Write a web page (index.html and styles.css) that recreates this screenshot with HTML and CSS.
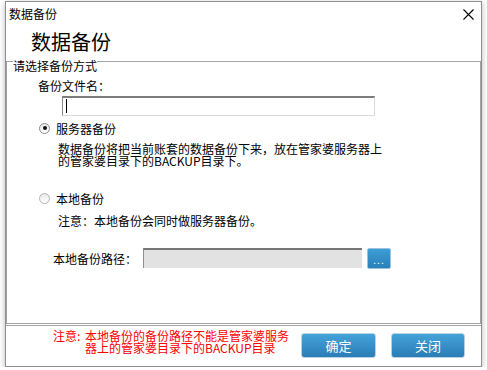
FILE: index.html
```html
<!DOCTYPE html>
<html lang="zh-CN">
<head>
    <meta charset="UTF-8">
    <title>数据备份</title>
    <link rel="stylesheet" href="styles.css">
</head>
<body>
    <div class="window">
        <div class="titlebar">
            <span class="title">数据备份</span>
            <svg class="close" width="11" height="11" viewBox="0 0 11 11">
                <path d="M0.5 0.5 L10.5 10.5 M10.5 0.5 L0.5 10.5" stroke="#000" stroke-width="1.1" fill="none"/>
            </svg>
        </div>

        <h1 class="heading">数据备份</h1>

        <div class="group">
            <div class="legend">请选择备份方式</div>

            <div class="field-label">备份文件名：</div>
            <div class="text-input"><span class="caret"></span></div>

            <div class="radio-row"><span class="radio checked"></span>服务器备份</div>
            <p class="desc">数据备份将把当前账套的数据备份下来，放在管家婆服务器上的管家婆目录下的BACKUP目录下。</p>

            <div class="radio-row second"><span class="radio"></span>本地备份</div>
            <p class="hint">注意：本地备份会同时做服务器备份。</p>

            <div class="path-row">
                <span class="path-label">本地备份路径：</span>
                <div class="path-input"></div>
                <button class="browse">...</button>
            </div>
        </div>

        <div class="footer">
            <div class="warning">
                <span class="warning-tag">注意:</span>
                <span class="warning-text">本地备份的备份路径不能是管家婆服务器上的管家婆目录下的BACKUP目录</span>
            </div>
            <div class="actions">
                <button class="btn">确定</button>
                <button class="btn">关闭</button>
            </div>
        </div>
    </div>
</body>
</html>
```

FILE: styles.css
```css
* {
    box-sizing: border-box;
    margin: 0;
    padding: 0;
}

body {
    font-family: "Noto Sans CJK SC", "Noto Sans", sans-serif;
    font-size: 12px;
    color: #000;
    background-color: #fff;
    padding: 1px 0 0 5px;
}

.window {
    width: 477px;
    height: 366px;
    border: 1px solid #8e8e8e;
    background-color: #fff;
    box-shadow: 0 2px 6px rgba(0, 0, 0, 0.28);
}

/* title bar */
.titlebar {
    height: 24px;
    display: flex;
    align-items: center;
    justify-content: space-between;
    padding: 0 7px 0 3px;
}
.title {
    line-height: 24px;
}
.close {
    display: block;
}

.heading {
    font-size: 20px;
    font-weight: normal;
    line-height: 20px;
    margin: 6px 0 9px;
    padding-left: 25px;
}

/* group box */
.group {
    height: 263px;
    border: 1px solid #a3a3a3;
}
.legend {
    width: max-content;
    margin: -3px 0 0 6px;
    line-height: 14px;
    background-color: #fff;
}

.field-label {
    margin-top: 5px;
    padding-left: 31px;
    line-height: 16px;
}
.text-input {
    margin: 2px 0 0 55px;
    width: 313px;
    height: 20px;
    border-top: 2px solid #7c7c7c;
    border-left: 1px solid #8a8a8a;
    border-right: 1px solid #dadada;
    border-bottom: 1px solid #dadada;
    padding: 1px 0 0 3px;
}
.caret {
    display: block;
    width: 1px;
    height: 14px;
    background-color: #000;
}

.radio-row {
    display: flex;
    align-items: center;
    gap: 6px;
    height: 16px;
    margin: 4px 0 0 32px;
}
.radio-row.second {
    margin-top: 23px;
}
.radio {
    width: 11px;
    height: 11px;
    border-radius: 50%;
    border: 1px solid #b4b4b4;
    background: linear-gradient(#e8e8e8, #fff);
    position: relative;
}
.radio.checked {
    border-color: #8c8c8c;
}
.radio.checked::after {
    content: "";
    position: absolute;
    left: 2.5px;
    top: 2.5px;
    width: 4px;
    height: 4px;
    border-radius: 50%;
    background-color: #111;
}

.desc {
    width: 378px;
    margin-top: 7px;
    padding-left: 51px;
    line-height: 12px;
}
.hint {
    margin-top: 7px;
    padding-left: 51px;
    line-height: 16px;
}

.path-row {
    display: flex;
    align-items: flex-start;
    margin-top: 19px;
    padding-left: 46px;
    height: 21px;
}
.path-label {
    width: 90px;
    line-height: 21px;
}
.path-input {
    width: 219px;
    height: 20px;
    background-color: #e2e2e2;
    border-top: 2px solid #777;
    border-left: 1px solid #8f8f8f;
}
.browse {
    width: 24px;
    height: 21px;
    margin-left: 5px;
    border: 1px solid #9cc3de;
    border-radius: 2px;
    background: linear-gradient(#3d9ed5, #2a80b8);
    color: #fff;
    font-family: inherit;
    font-size: 10px;
    line-height: 22px;
    letter-spacing: 1px;
}

/* footer */
.footer {
    margin-top: 1px;
    height: 41px;
    border-top: 1px solid #a3a3a3;
    display: flex;
    align-items: flex-start;
    padding: 0 16px 0 47px;
}
.warning {
    display: flex;
    margin-top: 4px;
    color: #ff0000;
    line-height: 12px;
}
.warning-tag {
    width: 32px;
}
.warning-text {
    width: 206px;
}
.actions {
    display: flex;
    gap: 15px;
    margin: 7px 0 0 auto;
}
.btn {
    width: 75px;
    height: 25px;
    border: 1px solid #b9d1e3;
    border-radius: 3px;
    background: linear-gradient(#44a3d8, #2a7db6);
    color: #fff;
    font-family: inherit;
    font-size: 13px;
    cursor: pointer;
}
.btn + .btn {
    width: 74px;
}
```
